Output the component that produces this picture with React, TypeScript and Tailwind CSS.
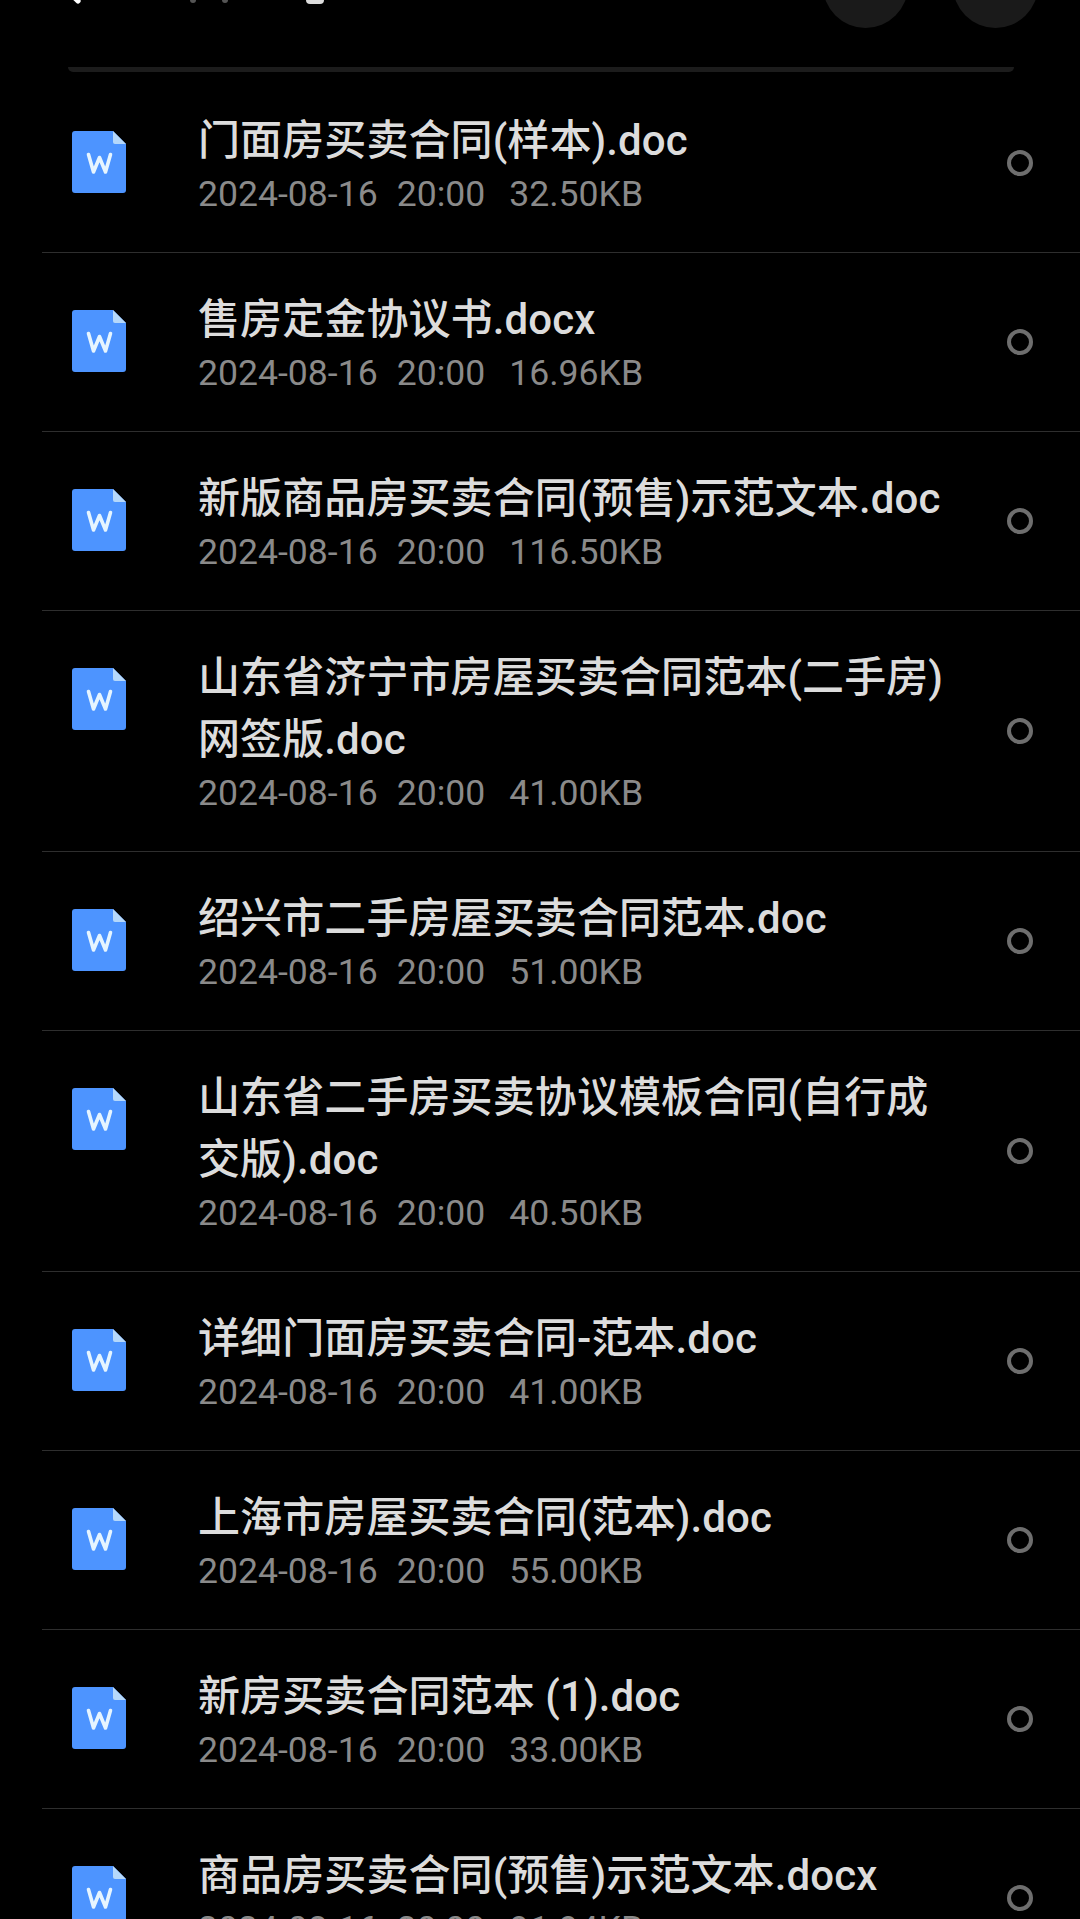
import { Search } from 'lucide-react';

const files = [
  { name: '门面房买卖合同(样本).doc', size: '32.50KB' },
  { name: '售房定金协议书.docx', size: '16.96KB' },
  { name: '新版商品房买卖合同(预售)示范文本.doc', size: '116.50KB' },
  { name: '山东省济宁市房屋买卖合同范本(二手房)网签版.doc', size: '41.00KB' },
  { name: '绍兴市二手房屋买卖合同范本.doc', size: '51.00KB' },
  { name: '山东省二手房买卖协议模板合同(自行成交版).doc', size: '40.50KB' },
  { name: '详细门面房买卖合同-范本.doc', size: '41.00KB' },
  { name: '上海市房屋买卖合同(范本).doc', size: '55.00KB' },
  { name: '新房买卖合同范本 (1).doc', size: '33.00KB' },
  { name: '商品房买卖合同(预售)示范文本.docx', size: '91.94KB' },
];

function WordIcon() {
  return (
    <svg width="54" height="62" viewBox="0 0 54 62" className="mt-[57px] shrink-0">
      <path d="M3 0H41L54 13V59a3 3 0 0 1-3 3H3a3 3 0 0 1-3-3V3a3 3 0 0 1 3-3Z" fill="#4d94ff" />
      <path d="M41 0L54 13H43a2 2 0 0 1-2-2Z" fill="#b5d8fb" />
      <path d="M16.5 23.5L21.5 41L27.5 26.5L33.5 41L38.5 23.5" fill="none" stroke="#e6f5ff" strokeWidth="3.6" strokeLinejoin="round" strokeLinecap="round" />
    </svg>
  );
}

function FileRow({ name, size }: { name: string; size: string }) {
  return (
    <div className="ml-[42px] flex border-b border-[#2e2e2e] pl-[30px] pr-[47px]">
      <WordIcon />
      <div className="ml-[72px] w-[760px] pt-[36px] pb-[36px]">
        <div className="text-[42px] font-medium leading-[62px] tracking-[0.1px] text-[#dcdcdc]">{name}</div>
        <div className="flex text-[35.6px] leading-[44px] text-[#8a8a8a]">
          <span>2024-08-16</span>
          <span className="ml-[19px]">20:00</span>
          <span className="ml-[24px]">{size}</span>
        </div>
      </div>
      <div className="ml-auto h-[26px] w-[26px] self-center rounded-full border-[4px] border-[#6e6e6e]" />
    </div>
  );
}

export default function App() {
  return (
    <div className="h-[1919px] w-[1080px] overflow-hidden bg-black font-['Roboto','Noto_Sans_CJK_SC',sans-serif]">
      <div className="relative h-[74px]">
        <div className="flex justify-end gap-[45px] pr-[42px] -translate-y-[57px]">
          <div className="h-[85px] w-[85px] rounded-full bg-[#1a1a1a]" />
          <div className="h-[85px] w-[85px] rounded-full bg-[#1a1a1a]" />
        </div>
        {/* search bar is scrolled off, only the bottoms of its icon and text show */}
        <Search size={48} strokeWidth={2.6} className="absolute left-[36px] top-[-41px] text-white" />
        <div className="absolute left-[190px] top-[-3px] h-[6px] w-[6px] rounded-full bg-[#555555]" />
        <div className="absolute left-[222px] top-[-3px] h-[6px] w-[6px] rounded-full bg-[#555555]" />
        <div className="absolute left-[306px] top-[-4px] h-[8px] w-[18px] rounded-full bg-[#dcdcdc]" />
        <div className="absolute left-[68px] right-[66px] top-[67px] h-[5px] rounded-b-[10px] bg-[#1c1c1c]" />
      </div>
      {files.map((f) => (
        <FileRow key={f.name} name={f.name} size={f.size} />
      ))}
    </div>
  );
}
